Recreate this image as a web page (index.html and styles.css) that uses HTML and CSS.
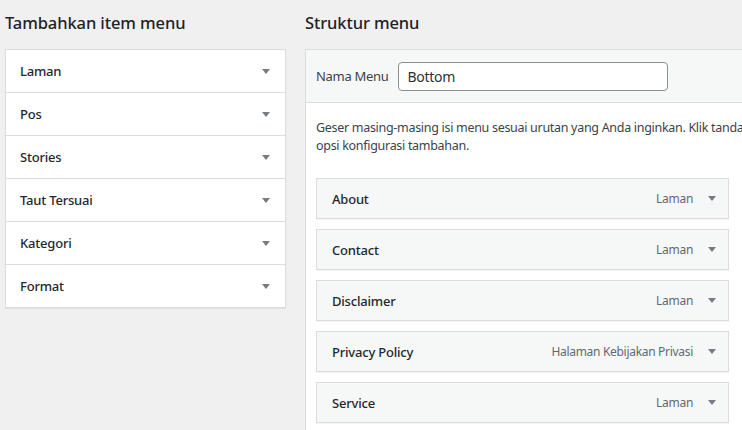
FILE: index.html
```html
<!DOCTYPE html>
<html lang="id">
<head>
<meta charset="utf-8">
<title>Menu</title>
<link rel="stylesheet" href="styles.css">
</head>
<body>
<div class="page">
  <section class="col-left">
    <h2 class="heading">Tambahkan item menu</h2>
    <div class="accordion">
      <div class="acc-row"><span>Laman</span><span class="arrow"></span></div>
      <div class="acc-row"><span>Pos</span><span class="arrow"></span></div>
      <div class="acc-row"><span>Stories</span><span class="arrow"></span></div>
      <div class="acc-row"><span>Taut Tersuai</span><span class="arrow"></span></div>
      <div class="acc-row"><span>Kategori</span><span class="arrow"></span></div>
      <div class="acc-row"><span>Format</span><span class="arrow"></span></div>
    </div>
  </section>
  <section class="col-right">
    <h2 class="heading">Struktur menu</h2>
    <div class="panel">
      <div class="panel-head">
        <label class="name-label">Nama Menu</label>
        <input class="name-input" type="text" value="Bottom">
      </div>
      <div class="panel-body">
        <p class="desc">Geser masing-masing isi menu sesuai urutan yang Anda inginkan. Klik tanda panah di sebelah kanan item untuk menampilkan<br>opsi konfigurasi tambahan.</p>
        <ul class="items">
          <li class="item"><span class="item-title">About</span><span class="item-type">Laman</span><span class="arrow"></span></li>
          <li class="item"><span class="item-title">Contact</span><span class="item-type">Laman</span><span class="arrow"></span></li>
          <li class="item"><span class="item-title">Disclaimer</span><span class="item-type">Laman</span><span class="arrow"></span></li>
          <li class="item"><span class="item-title">Privacy Policy</span><span class="item-type">Halaman Kebijakan Privasi</span><span class="arrow"></span></li>
          <li class="item"><span class="item-title">Service</span><span class="item-type">Laman</span><span class="arrow"></span></li>
        </ul>
      </div>
    </div>
  </section>
</div>
</body>
</html>
```
FILE: styles.css
```css
* { box-sizing: border-box; }
html, body { margin: 0; padding: 0; }
body {
  background: #f0f0f1;
  font-family: "Noto Sans", "Open Sans", sans-serif;
  color: #1d2327;
  font-size: 13px;
  width: 742px;
  height: 430px;
  overflow: hidden;
}
.page {
  display: flex;
  gap: 19px;
  padding: 0 0 0 5px;
}
.col-left { width: 281px; flex: none; }
.col-right { flex: 1; min-width: 0; }
.heading {
  margin: 0;
  height: 49px;
  padding-top: 12px;
  font-size: 16.5px;
  font-weight: 500;
  line-height: 22px;
  color: #1d2327;
  letter-spacing: -0.1px;
}
.accordion {
  background: #fff;
  border: 1px solid #dcdcde;
  box-shadow: 0 1px 1px rgba(0,0,0,0.06);
}
.acc-row {
  height: 43px;
  display: flex;
  align-items: center;
  justify-content: space-between;
  padding: 0 14px 0 14px;
  border-top: 1px solid #dcdcde;
  font-size: 13px;
  font-weight: 500;
  color: #23282d;
  letter-spacing: -0.2px;
}
.acc-row:first-child { border-top: none; height: 42px; }
.arrow {
  width: 0; height: 0;
  border-left: 4px solid transparent;
  border-right: 4px solid transparent;
  border-top: 5px solid #787c82;
  margin-right: 1px;
  flex: none;
}
.panel {
  border: 1px solid #dcdcde;
  border-right: none;
  background: #fff;
  height: 400px;
  overflow: hidden;
}
.panel-head {
  background: #f6f7f7;
  border-bottom: 1px solid #dcdcde;
  height: 53px;
  display: flex;
  align-items: center;
  padding-left: 10px;
  gap: 9px;
}
.name-label { font-size: 13px; color: #3c434a; letter-spacing: -0.3px; }
.name-input {
  width: 270px;
  height: 29px;
  border: 1px solid #8c8f94;
  border-radius: 4px;
  font-family: inherit;
  font-size: 14px;
  color: #2c3338;
  padding: 0 9px;
  background: #fff;
  letter-spacing: -0.3px;
}
.panel-body { padding: 0 0 0 10px; }
.desc {
  margin: 16px 0 23px;
  font-size: 12.5px;
  line-height: 18px;
  color: #3c434a;
  white-space: nowrap;
  letter-spacing: -0.3px;
}
.items { list-style: none; margin: 0; padding: 0; display: flex; flex-direction: column; gap: 10px; width: 413px; }
.item {
  height: 41px;
  display: flex;
  align-items: center;
  border: 1px solid #dcdcde;
  background: #f6f7f7;
  padding: 0 11px 0 15px;
  box-shadow: 0 1px 1px rgba(0,0,0,0.04);
}
.item-title { font-weight: 500; font-size: 13px; color: #23282d; flex: 1; letter-spacing: -0.2px; }
.item-type { font-size: 12px; color: #646970; margin-right: 15px; letter-spacing: -0.3px; }
```
